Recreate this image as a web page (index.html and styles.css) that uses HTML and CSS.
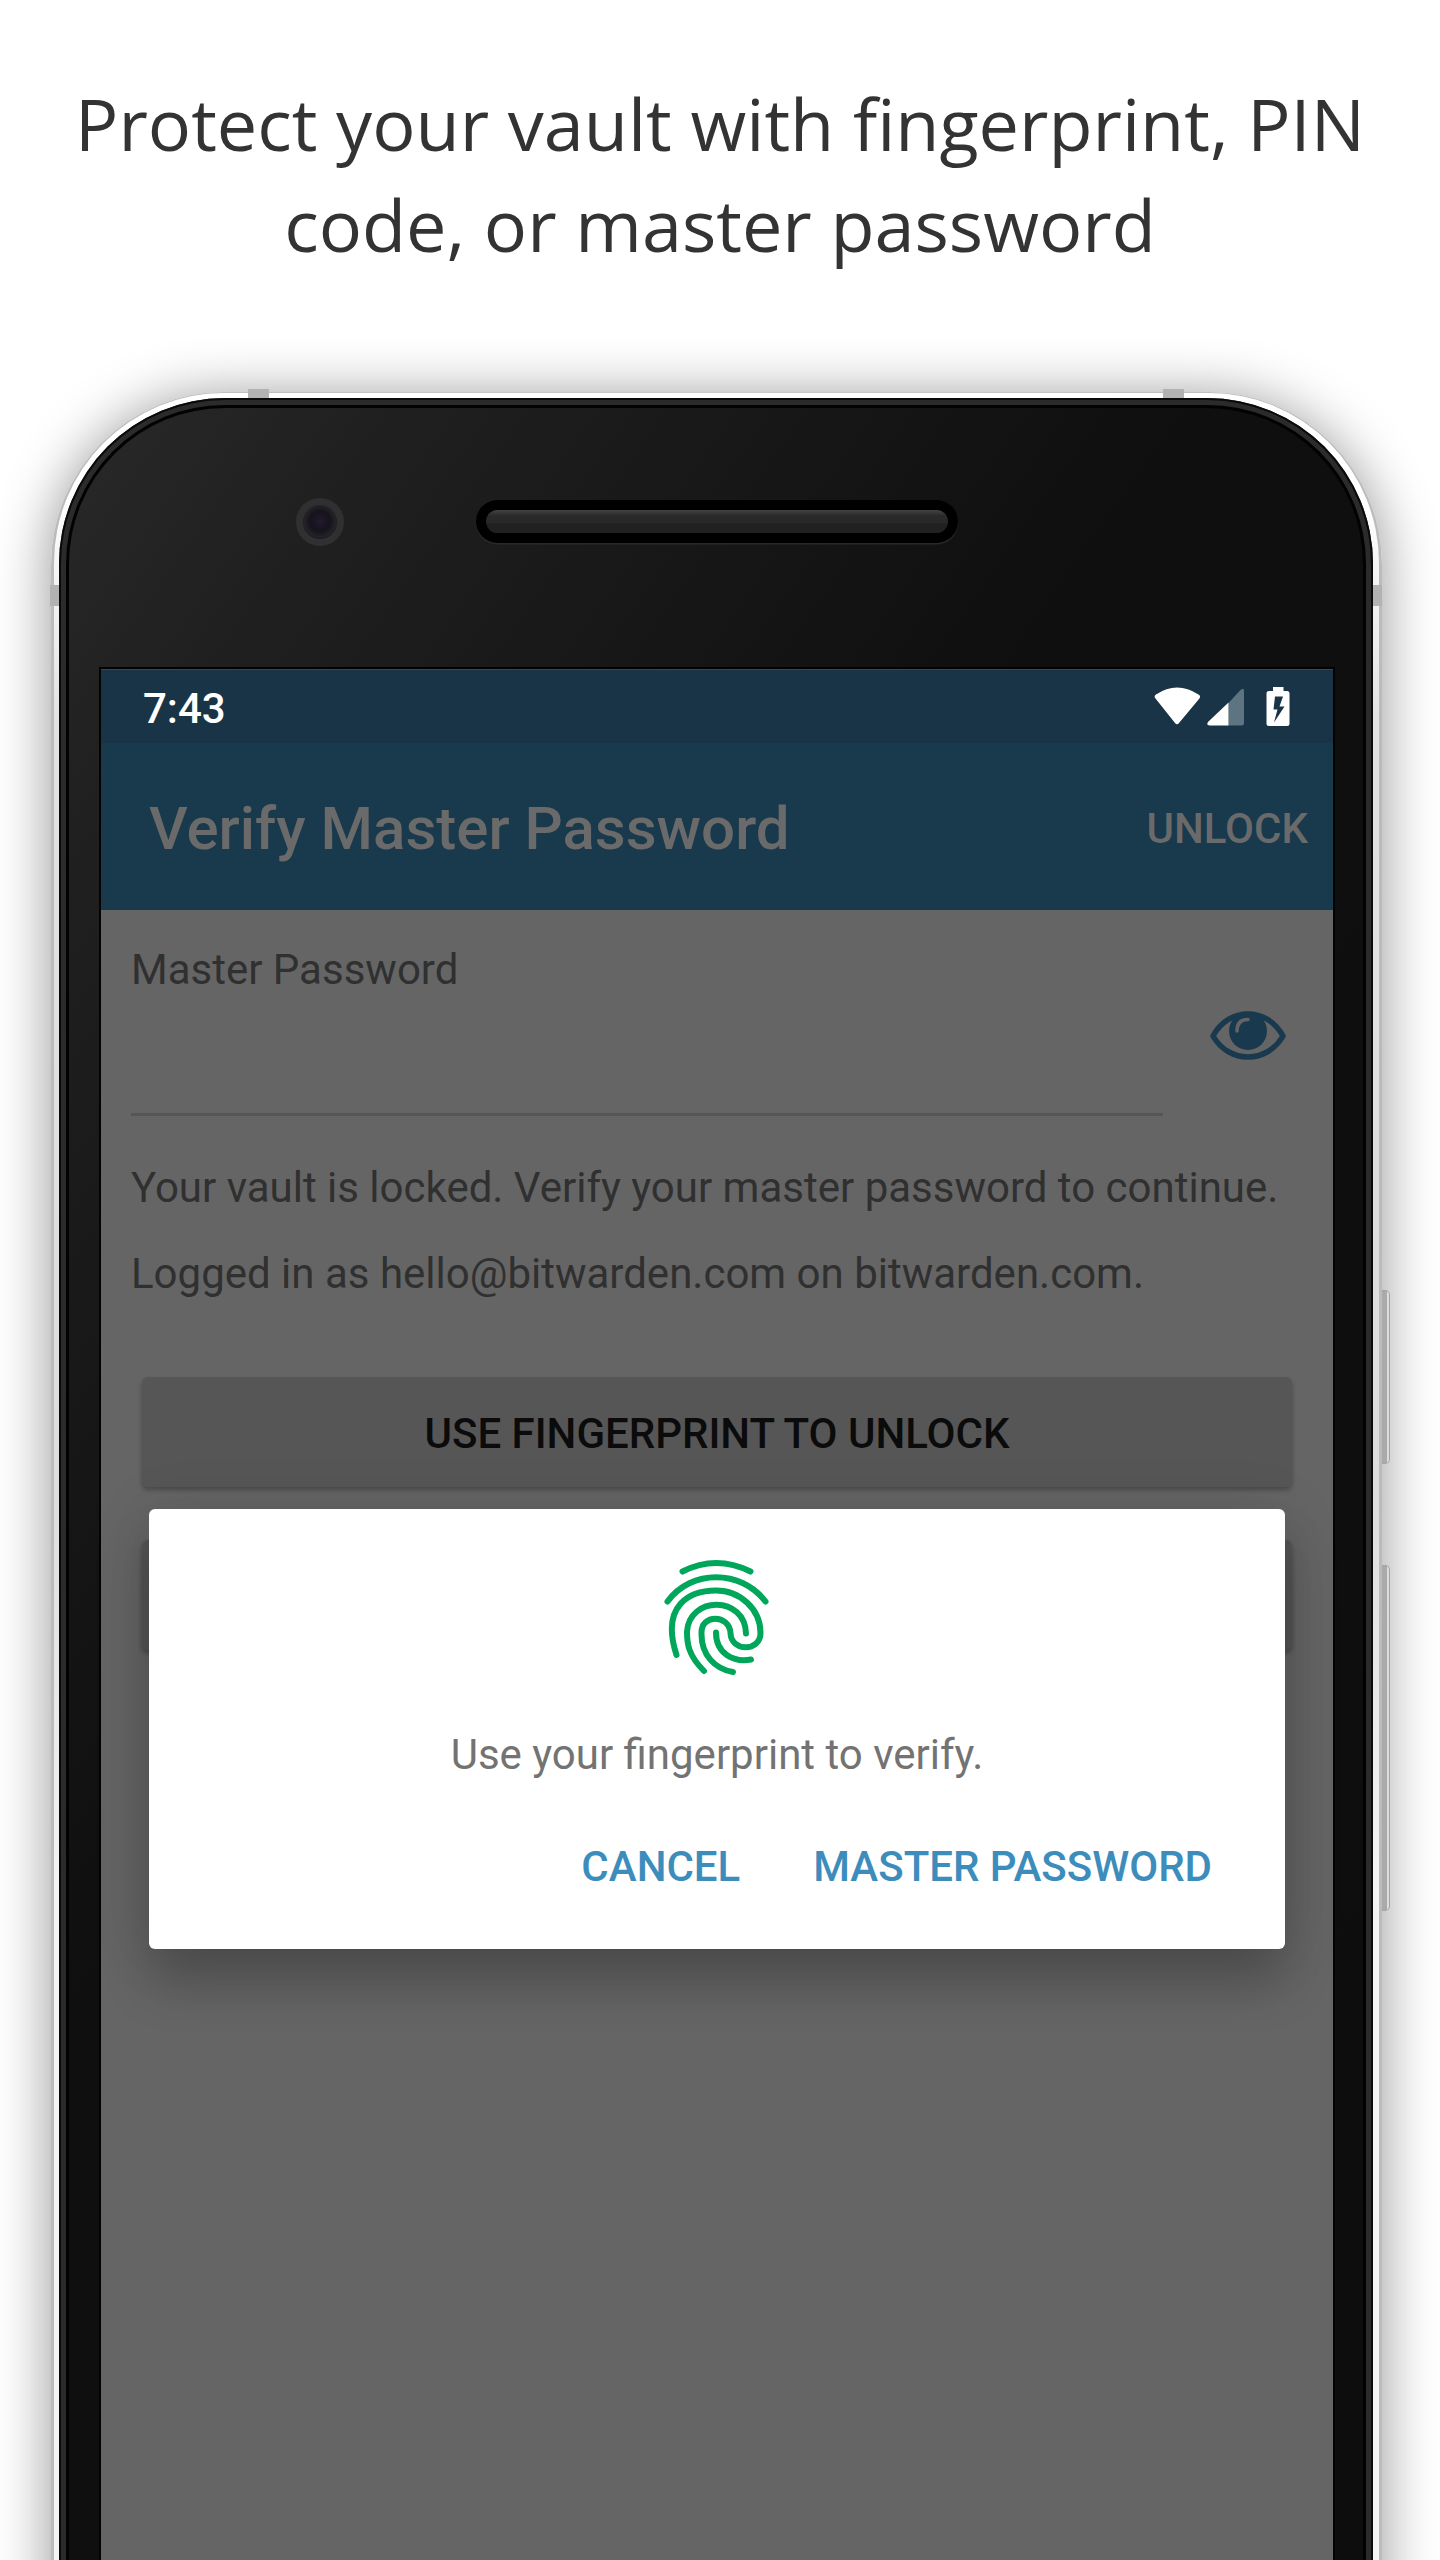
FILE: index.html
```html
<!DOCTYPE html>
<html lang="en">
<head>
<meta charset="utf-8">
<title>Verify Master Password</title>
<link rel="stylesheet" href="styles.css">
</head>
<body>
<main class="page">
  <h1 class="headline">Protect your vault with fingerprint, PIN<br>code, or master password</h1>
  <section class="phone">
    <i class="band band-top-left"></i>
    <i class="band band-top-right"></i>
    <i class="band band-left"></i>
    <i class="band band-right"></i>
    <i class="side-key power"></i>
    <i class="side-key volume"></i>
    <div class="shell"><div class="rim"><div class="glass">
      <div class="bezel">
        <span class="camera"></span>
        <span class="speaker"><span class="grille"></span></span>
      </div>
      <div class="screen">
        <div class="status">
          <span>7:43</span>
          <svg class="status-icons" width="142" height="44" viewBox="0 0 142 44">
            <path fill="#fff" d="M1.5 11.5Q-.5 9 2 7.500Q23 -6.500 44.500 7.500Q47.500 9 45 12L25 36Q23 38.500 21 36Z"/>
            <path fill="#5e7481" d="M74.500 16L86 3.500Q90 0 90 4V36Q90 38.500 87.500 38.500H74.500Z"/>
            <path fill="#fff" d="M74.500 15.500V38.500H55.500Q51.500 38 54.500 34.500Z"/>
            <path fill="#fff" fill-rule="evenodd" d="M119 0H129.500V4H133Q135.500 4 135.500 6.500V36.500Q135.500 39 133 39H115Q112.500 39 112.500 36.500V6.500Q112.500 4 115 4H119ZM121 9.500L119.500 22.500H123.500L120 35.500L130.500 19.500H125.500L129 9.500Z"/>
          </svg>
        </div>
        <header class="toolbar"><span class="title">Verify Master Password</span><span class="action">UNLOCK</span></header>
        <div class="form">
          <div class="field">
            <div class="input"><label>Master Password</label></div>
            <svg class="eye" width="76" height="50" viewBox="0 0 76 50">
              <path fill="none" stroke="#193a4e" stroke-width="5.500" stroke-linejoin="round" d="M3 25C19-4.500 57-4.500 73 25C57 53 19 53 3 25Z"/>
              <circle cx="38" cy="20" r="19" fill="#193a4e"/>
              <path fill="none" stroke="#656565" stroke-width="3.500" stroke-linecap="round" d="M27 20Q27 8.500 38 8.500"/>
            </svg>
          </div>
          <p class="note">Your vault is locked. Verify your master password to continue.</p>
          <p class="note">Logged in as hello@bitwarden.com on bitwarden.com.</p>
          <div class="button">USE FINGERPRINT TO UNLOCK</div>
          <div class="button second"></div>
        </div>
        <div class="dialog">
          <svg class="finger" width="108" height="120" viewBox="0 0 108 120" fill="none" stroke="#00a65a" stroke-width="6" stroke-linecap="round">
            <path d="M20.500 12.500Q54 -4.500 88.500 12.500"/>
            <path d="M5.500 42.500C29 10 79 10 103.500 42.500"/>
            <path d="M14.500 96C-2 45 29 31.500 54 31.500C78 31.500 98.500 50 98.500 74C98.500 93 69 93 68.500 74C67 55 39 55 39.500 74C39 96 53 110 71 113"/>
            <path d="M42 112C26 96 25 84 25 73C27 36.500 83 36.500 84 74.500"/>
            <path d="M54 73.500C54 95 72 103.500 89 100.500"/>
          </svg>
          <p class="prompt">Use your fingerprint to verify.</p>
          <div class="actions"><span>CANCEL</span><span>MASTER PASSWORD</span></div>
        </div>
      </div>
    </div></div></div>
  </section>
</main>
</body>
</html>
```
FILE: styles.css
```css
* { box-sizing: border-box; }
body { margin: 0; background: #fff; }
.page { width: 1440px; height: 2560px; overflow: hidden; display: flex; flex-direction: column; align-items: center; }
.headline { margin: 0; padding-top: 73px; height: 392px; flex: none; font: 400 72px/100.5px "Open Sans", sans-serif; color: #333; text-align: center; white-space: nowrap; }
.phone { position: relative; flex: none; width: 1331px; height: 2400px; margin-right: 7px; padding: 1px 3px 0; border-radius: 173px 173px 0 0; background: linear-gradient(90deg, #bbb, #ccc 50%, #bbb); box-shadow: 0 5px 56px rgba(0,0,0,.42); }
.shell { height: 100%; padding: 5px 6px 0 5px; border-radius: 170px 170px 0 0; background: linear-gradient(180deg, #fff 0, #fff 100px, #e2e2e2 330px, #ddd 1100px, #f4f4f4 1500px); }
.rim { height: 100%; padding: 7px 7px 0; border-radius: 166px 166px 0 0; background: #2b2b2b; box-shadow: inset 0 0 0 2px #0a0a0a; }
.glass { height: 100%; padding: 0 30px 0 32px; border-radius: 159px 159px 0 0; border: 3px solid #020202; border-bottom: 0; background: linear-gradient(125deg, #292929 0, #202020 250px, #151515 670px, #0f0f0f 920px, #0d0d0d 100%); }
.bezel { position: relative; height: 261px; display: flex; align-items: center; justify-content: center; }
.camera { position: absolute; left: 195px; top: 90px; width: 48px; height: 48px; border-radius: 50%; border: 7px solid #303030; background: radial-gradient(circle at 50% 48%, #211a30, #15131a 40%, #25232a 65%, #141217 75%); }
.speaker { width: 482px; height: 43px; margin-top: -34px; padding: 10px; border-radius: 22px; background: #000; box-shadow: 0 1.500px 1px #2b2b2b; }
.grille { display: block; height: 23px; border-radius: 12px; background: linear-gradient(#444, #2a2a2a 25%, #282828 55%, #212121 60%); }
.screen { position: relative; height: 1900px; outline: 2px solid #030303; background: #656565; font-family: Roboto, sans-serif; }
.status { height: 74px; padding: 18px 37px 0 42px; display: flex; justify-content: space-between; background: #183446; border-top: 1px solid #3b464e; color: #fff; font: 500 42px/42px Roboto, sans-serif; }
.status-icons { margin-top: -1px; }
.toolbar { height: 167px; padding: 4px 25px 0 48px; display: flex; align-items: center; justify-content: space-between; background: #19394d; color: #6a6a6a; font-weight: 500; }
.title { font-size: 60px; }
.action { font-size: 42px; }
.form { padding: 30px; color: #303030; }
.field { display: flex; justify-content: space-between; align-items: flex-start; height: 176px; margin: 0 17px 29px 0; }
.input { width: 1032px; height: 176px; border-bottom: 3px solid #565656; font-size: 42px; line-height: 60px; }
.eye { margin-top: 71px; }
.note { margin: 0; font-size: 42px; line-height: 86px; white-space: nowrap; }
.button { margin: 60px 11px 0; height: 110px; border-radius: 6px; background: #565656; box-shadow: 0 3px 5px rgba(0,0,0,.28); color: #0b0b0b; text-align: center; font: 500 42px/113px Roboto, sans-serif; }
.second { margin-top: 53px; }
.dialog { position: absolute; left: 48px; top: 840px; width: 1136px; height: 440px; border-radius: 6px; background: #fff; box-shadow: 0 36px 50px rgba(0,0,0,.2), 0 4px 60px rgba(0,0,0,.12); display: flex; flex-direction: column; align-items: center; padding-top: 50px; }
.finger { flex: none; margin-right: 2px; }
.prompt { margin: 52px 0 0; font-size: 42px; line-height: 48px; color: #737373; }
.actions { align-self: flex-end; display: flex; gap: 73px; margin: 64px 73px 0 0; color: #3c8dbc; font: 500 42px/48px Roboto, sans-serif; }
.band { position: absolute; background: #b2b2b2; }
.band-top-left, .band-top-right { top: -3px; width: 21px; height: 9px; }
.band-top-left { left: 197px; }
.band-top-right { left: 1112px; }
.band-left, .band-right { top: 193px; width: 9px; height: 21px; }
.band-left { left: -1px; }
.band-right { right: 0; }
.side-key { position: absolute; left: 1331px; width: 8px; border: 1px solid #a4a4a4; border-left: 0; border-radius: 0 5px 5px 0; background: linear-gradient(90deg, #aaa 5px, #ddd 5px); }
.power { top: 898px; height: 174px; }
.volume { top: 1173px; height: 346px; }
```
